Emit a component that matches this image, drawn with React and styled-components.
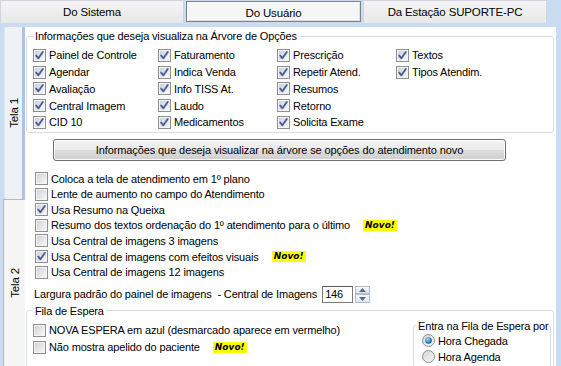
import React from "react";
import styled, { createGlobalStyle } from "styled-components";

const Global = createGlobalStyle`
  html, body { margin: 0; padding: 0; background: #c9dcf2; }
  body { font-family: "Liberation Sans", Arial, sans-serif; font-size: 11px; letter-spacing: -0.15px; color: #000; }
  * { box-sizing: border-box; }
`;

const Window = styled.div`
  width: 561px;
  height: 366px;
  background: #c9dcf2;
  display: flex;
  flex-direction: column;
  overflow: hidden;
`;

const TopTabs = styled.div`
  display: flex;
  height: 23px;
  flex: none;
`;

const TopTab = styled.div`
  width: ${(p) => p.$w}px;
  display: flex;
  align-items: center;
  justify-content: center;
  padding-top: ${(p) => (p.$active ? 2 : 0)}px;
  background: ${(p) => (p.$active ? "#f6f6f6" : "linear-gradient(#f3f3f3, #e8e8e8)")};
  border: 1px solid ${(p) => (p.$active ? "#7d7d7d" : "#d2d6dc")};
  border-bottom: ${(p) => (p.$active ? "1px solid #7d7d7d" : "none")};
  margin-top: ${(p) => (p.$active ? 1 : 0)}px;
  height: ${(p) => (p.$active ? 21 : 23)}px;
  margin-right: 2px;
  box-shadow: ${(p) => (p.$active ? "inset 1px 1px 0 #ffffff, inset -1px -1px 0 #e0e0e0" : "none")};
  font-size: 11.5px;
`;

const Body = styled.div`
  flex: 1;
  display: flex;
  margin-top: 4px;
  min-height: 0;
`;

const SideTabs = styled.div`
  width: 25px;
  flex: none;
  display: flex;
  flex-direction: column;
`;

const SideTab = styled.div`
  flex: ${(p) => p.$grow};
  margin-left: ${(p) => (p.$active ? 3 : 4)}px;
  display: flex;
  align-items: center;
  justify-content: center;
  background: ${(p) => (p.$active ? "#f5f5f5" : "#eef1f5")};
  border-left: 1px solid ${(p) => (p.$active ? "#b8b8b8" : "#dde5ee")};
  border-top: ${(p) => (p.$active ? "1px solid #b8b8b8" : "none")};
  border-right: ${(p) => (p.$active ? "none" : "3px solid #a9c4e8")};
`;

const SideLabel = styled.span`
  writing-mode: vertical-rl;
  transform: rotate(180deg);
  font-size: 11.5px;
  white-space: nowrap;
`;

const Content = styled.div`
  flex: 1;
  background: #ffffff;
  margin-right: 5px;
  padding: 2px 2px 0 1px;
  display: flex;
  flex-direction: column;
`;

const Group = styled.fieldset`
  margin: 0;
  padding: 0 2px 0 6px;
  border: 1px solid #d5dfe5;
  border-radius: 3px;
  min-width: 0;
`;

const Legend = styled.legend`
  padding: 0 ${(p) => p.$px ?? 2}px;
  margin-left: 0;
  line-height: 14px;
  font-size: 11px;
  white-space: nowrap;
`;

const OptionsGrid = styled.div`
  display: grid;
  grid-template-columns: 125px 119px 119px 1fr;
  grid-auto-rows: 16.75px;
  padding: 4px 0 1px;
`;

const CheckRow = styled.label`
  display: flex;
  align-items: center;
  gap: ${(p) => p.$gap ?? 3}px;
  height: ${(p) => p.$h ?? 16}px;
  padding-left: ${(p) => p.$pl ?? 0}px;
  white-space: nowrap;
  font-size: 11px;
`;

const ButtonRow = styled.div`
  padding: 6px 0 0 27px;
`;

const WideButton = styled.button`
  width: 453px;
  height: 22px;
  font-family: inherit;
  font-size: 11px;
  letter-spacing: -0.1px;
  color: #000;
  background: linear-gradient(#f2f2f2 0%, #ebebeb 50%, #dddddd 51%, #cfcfcf 100%);
  border: 1px solid #707070;
  border-radius: 3px;
  box-shadow: inset 0 0 0 1px #fcfcfc;
  padding: 0;
`;

const CheckList = styled.div`
  display: flex;
  flex-direction: column;
  padding: 10px 0 0 9px;
`;

const Badge = styled.span`
  display: inline-block;
  background: #ffff00;
  font-family: "DejaVu Sans", sans-serif;
  font-weight: bold;
  font-style: italic;
  font-size: 9px;
  letter-spacing: 0;
  line-height: 11px;
  padding: 0 2px;
  margin-left: 10px;
`;

const WidthRow = styled.div`
  display: flex;
  align-items: center;
  gap: 5px;
  height: 18px;
  margin: 6px 0 1px 8px;
  white-space: pre;
  font-size: 11px;
`;

const NumInput = styled.div`
  width: 31px;
  height: 17px;
  border: 1px solid #7a7a7a;
  border-top-color: #5a5a5a;
  padding: 0 2px;
  line-height: 15px;
  font-size: 11px;
  background: #fff;
`;

const Spin = styled.div`
  width: 15px;
  height: 17px;
  display: flex;
  flex-direction: column;
  margin-left: -3px;
`;

const SpinBtn = styled.div`
  flex: 1;
  border: 1px solid #b4bcc7;
  background: linear-gradient(#f6f8fa, #dfe5ec);
  display: flex;
  align-items: center;
  justify-content: center;
`;

const FilaInner = styled.div`
  display: flex;
  align-items: flex-start;
`;

const FilaChecks = styled.div`
  display: flex;
  flex-direction: column;
  padding-top: 4px;
  flex: 1;
`;

const SubGroup = styled.fieldset`
  margin: 1px 0 0 0;
  padding: 0 0 2px 3px;
  width: 138px;
  min-width: 0;
  border: 1px solid #d5dfe5;
  border-radius: 3px;
`;

const Check = ({ checked }) => (
  <svg width="13" height="13" viewBox="0 0 13 13" style={{ flex: "none" }}>
    <defs>
      <linearGradient id="cbg" x1="0" y1="0" x2="1" y2="1">
        <stop offset="0" stopColor="#cfd2d6" />
        <stop offset="1" stopColor="#f7f7f7" />
      </linearGradient>
    </defs>
    <rect x="0.5" y="0.5" width="12" height="12" fill="#f4f4f4" stroke="#8f8f8f" />
    <rect x="2" y="2" width="9" height="9" fill="url(#cbg)" />
    {checked && (
      <path d="M3.2 6.6 L5.4 9.3 L9.8 3" stroke="#4a5f9a" strokeWidth="1.9" fill="none" strokeLinecap="round" strokeLinejoin="round" />
    )}
  </svg>
);

const Radio = ({ checked }) => (
  <svg width="13" height="13" viewBox="0 0 13 13" style={{ flex: "none" }}>
    <defs>
      <linearGradient id="rbg" x1="0" y1="0" x2="1" y2="1">
        <stop offset="0" stopColor="#d0d3d7" />
        <stop offset="1" stopColor="#f8f8f8" />
      </linearGradient>
      <radialGradient id="rdot" cx="0.4" cy="0.35" r="0.7">
        <stop offset="0" stopColor="#a9dcf7" />
        <stop offset="0.6" stopColor="#2b87c7" />
        <stop offset="1" stopColor="#13507f" />
      </radialGradient>
    </defs>
    <circle cx="6.5" cy="6.5" r="6" fill="url(#rbg)" stroke="#8f8f8f" />
    {checked && <circle cx="6.5" cy="6.5" r="3.3" fill="url(#rdot)" />}
  </svg>
);

const Option = ({ label, checked, h, badge }) => (
  <CheckRow $h={h}>
    <Check checked={checked} />
    <span>{label}</span>
    {badge && <Badge>Novo!</Badge>}
  </CheckRow>
);

const treeOptions = [
  ["Painel de Controle", "Faturamento", "Prescrição", "Textos"],
  ["Agendar", "Indica Venda", "Repetir Atend.", "Tipos Atendim."],
  ["Avaliação", "Info TISS At.", "Resumos", null],
  ["Central Imagem", "Laudo", "Retorno", null],
  ["CID 10", "Medicamentos", "Solicita Exame", null],
];

const listOptions = [
  ["Coloca a tela de atendimento em 1º plano", false, false],
  ["Lente de aumento no campo do Atendimento", false, false],
  ["Usa Resumo na Queixa", true, false],
  ["Resumo dos textos ordenação do 1º atendimento para o último", false, true],
  ["Usa Central de imagens 3 imagens", false, false],
  ["Usa Central de imagens com efeitos visuais", true, true],
  ["Usa Central de imagens 12 imagens", false, false],
];

export default function App() {
  return (
    <Window>
      <Global />
      <TopTabs>
        <TopTab $w={184}>Do Sistema</TopTab>
        <TopTab $w={175} $active>Do Usuário</TopTab>
        <TopTab $w={184}>Da Estação SUPORTE-PC</TopTab>
      </TopTabs>
      <Body>
        <SideTabs>
          <SideTab $grow="0 0 172px">
            <SideLabel>Tela 1</SideLabel>
          </SideTab>
          <SideTab $grow="1" $active>
            <SideLabel>Tela 2</SideLabel>
          </SideTab>
        </SideTabs>
        <Content>
          <Group>
            <Legend>Informações que deseja visualiza na Árvore de Opções</Legend>
            <OptionsGrid>
              {treeOptions.flat().map((o, i) =>
                o ? <Option key={i} label={o} checked h={16.75} /> : <span key={i} />
              )}
            </OptionsGrid>
          </Group>
          <ButtonRow>
            <WideButton>Informações que deseja visualizar na árvore se opções do atendimento novo</WideButton>
          </ButtonRow>
          <CheckList>
            {listOptions.map(([l, c, b]) => (
              <Option key={l} label={l} checked={c} badge={b} h={15.6} />
            ))}
          </CheckList>
          <WidthRow>
            <span>Largura padrão do painel de imagens  - Central de Imagens</span>
            <NumInput>146</NumInput>
            <Spin>
              <SpinBtn>
                <svg width="7" height="4" viewBox="0 0 7 4"><path d="M0 4 L3.5 0 L7 4Z" fill="#5a6a80" /></svg>
              </SpinBtn>
              <SpinBtn>
                <svg width="7" height="4" viewBox="0 0 7 4"><path d="M0 0 L3.5 4 L7 0Z" fill="#5a6a80" /></svg>
              </SpinBtn>
            </Spin>
          </WidthRow>
          <Group>
            <Legend>Fila de Espera</Legend>
            <FilaInner>
              <FilaChecks>
                <Option label="NOVA ESPERA em azul (desmarcado aparece em vermelho)" h={17} />
                <Option label="Não mostra apelido do paciente" badge h={17} />
              </FilaChecks>
              <SubGroup>
                <Legend $px={1}>Entra na Fila de Espera por</Legend>
                <CheckRow $h={16} $pl={5}>
                  <Radio checked />
                  <span>Hora Chegada</span>
                </CheckRow>
                <CheckRow $h={16} $pl={5}>
                  <Radio />
                  <span>Hora Agenda</span>
                </CheckRow>
              </SubGroup>
            </FilaInner>
          </Group>
        </Content>
      </Body>
    </Window>
  );
}
